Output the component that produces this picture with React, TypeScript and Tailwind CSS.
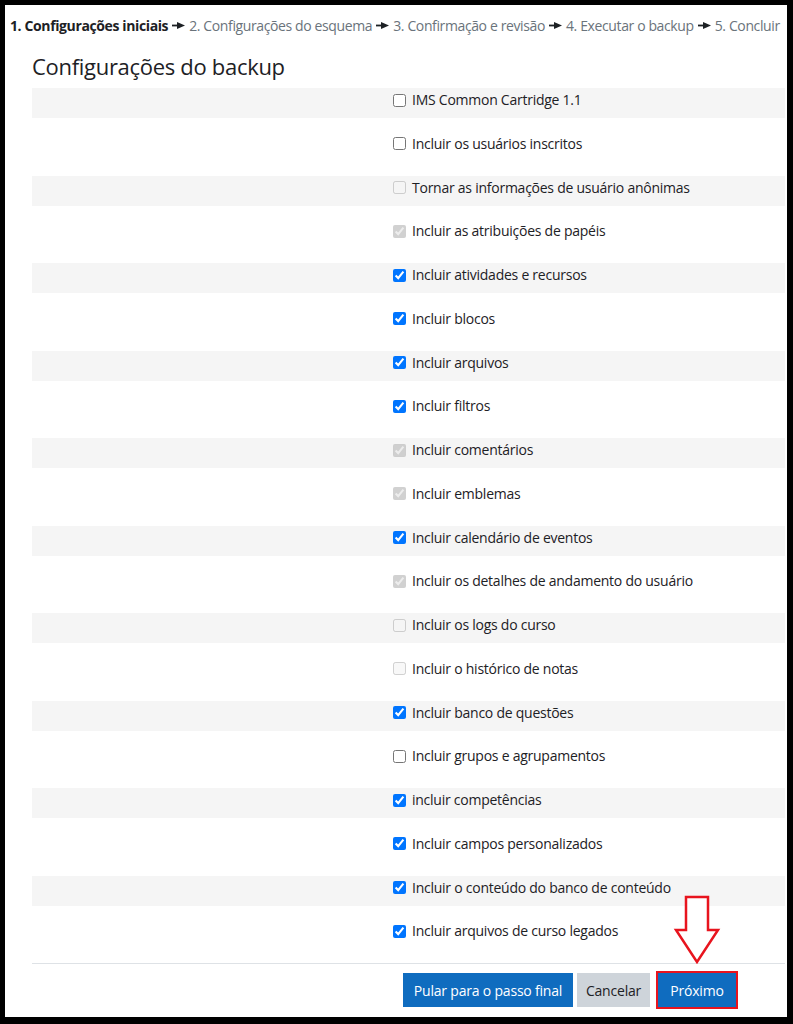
import React from 'react';

type Kind = 'u' | 'c' | 'du' | 'dc';

const rows: [string, Kind][] = [
  ['IMS Common Cartridge 1.1', 'u'],
  ['Incluir os usuários inscritos', 'u'],
  ['Tornar as informações de usuário anônimas', 'du'],
  ['Incluir as atribuições de papéis', 'dc'],
  ['Incluir atividades e recursos', 'c'],
  ['Incluir blocos', 'c'],
  ['Incluir arquivos', 'c'],
  ['Incluir filtros', 'c'],
  ['Incluir comentários', 'dc'],
  ['Incluir emblemas', 'dc'],
  ['Incluir calendário de eventos', 'c'],
  ['Incluir os detalhes de andamento do usuário', 'dc'],
  ['Incluir os logs do curso', 'du'],
  ['Incluir o histórico de notas', 'du'],
  ['Incluir banco de questões', 'c'],
  ['Incluir grupos e agrupamentos', 'u'],
  ['incluir competências', 'c'],
  ['Incluir campos personalizados', 'c'],
  ['Incluir o conteúdo do banco de conteúdo', 'c'],
  ['Incluir arquivos de curso legados', 'c'],
];

function Sep() {
  return (
    <svg width="13" height="9" viewBox="0 0 13 9" className="mx-[4px] inline-block">
      <rect x="0" y="3.6" width="6" height="1.8" fill="#1d2125" />
      <polygon points="5,1 13,4.5 5,8" fill="#1d2125" />
    </svg>
  );
}

export default function App() {
  const font = { fontFamily: '"Open Sans", "Noto Sans", sans-serif' };
  return (
    <div className="w-[793px] h-[1024px] bg-black pt-[5px] pl-[5px] pr-[6px] pb-[7px]" style={font}>
      <div className="relative w-full h-full bg-white text-[#1d2125] overflow-hidden">
        {/* breadcrumb */}
        <div className="flex items-center pl-[5px] pt-[7px] h-[34px] text-[14px] leading-[20px] whitespace-nowrap tracking-[-0.38px]">
          <span className="font-bold">1. Configurações iniciais</span>
          <Sep />
          <span className="text-[#6a737b]">2. Configurações do esquema</span>
          <Sep />
          <span className="text-[#6a737b]">3. Confirmação e revisão</span>
          <Sep />
          <span className="text-[#6a737b]">4. Executar o backup</span>
          <Sep />
          <span className="text-[#6a737b]">5. Concluir</span>
        </div>
        <div className="pl-[27px] pr-[2px]">
          <h2 className="text-[22px] leading-[27px] mt-[14px] mb-[8px] tracking-[-0.3px]">Configurações do backup</h2>
          <div>
            {rows.map(([label, kind], i) => (
              <div key={i} className="h-[43.75px]">
                <div className={`h-[30px] ${i % 2 === 0 ? 'bg-[#f5f5f5]' : ''}`}>
                  <div className="h-[24px] flex items-center pl-[361px]">
                    <input
                      type="checkbox"
                      className="w-[13px] h-[13px] m-0"
                      defaultChecked={kind === 'c' || kind === 'dc'}
                      disabled={kind === 'du' || kind === 'dc'}
                    />
                    <span className="ml-[6px] text-[14px] leading-[20px] tracking-[-0.25px]">{label}</span>
                  </div>
                </div>
              </div>
            ))}
          </div>
          <div className="border-t border-[#dee2e6] pt-[7px] pl-[371px] flex items-center">
            <button className="w-[170px] h-[34px] bg-[#0f6cbf] text-white text-[14px] tracking-[-0.2px]">Pular para o passo final</button>
            <button className="ml-[4px] w-[73px] h-[34px] bg-[#ced4da] text-[#1d2125] text-[14px] tracking-[-0.2px]">Cancelar</button>
            <div className="ml-[6px] border-2 border-[#e8141e] w-[82px] h-[38px]">
              <button className="w-full h-full bg-[#0f6cbf] text-white text-[14px] tracking-[-0.2px]">Próximo</button>
            </div>
          </div>
        </div>
        {/* annotation arrow */}
        <svg className="absolute" style={{ left: 668, top: 890 }} width="48" height="72" viewBox="0 0 48 72">
          <polygon
            points="13,2 35,2 35,35 45,35 24,67 3,35 13,35"
            fill="white"
            stroke="#e8141e"
            strokeWidth="2.5"
            strokeLinejoin="miter"
          />
        </svg>
      </div>
    </div>
  );
}
